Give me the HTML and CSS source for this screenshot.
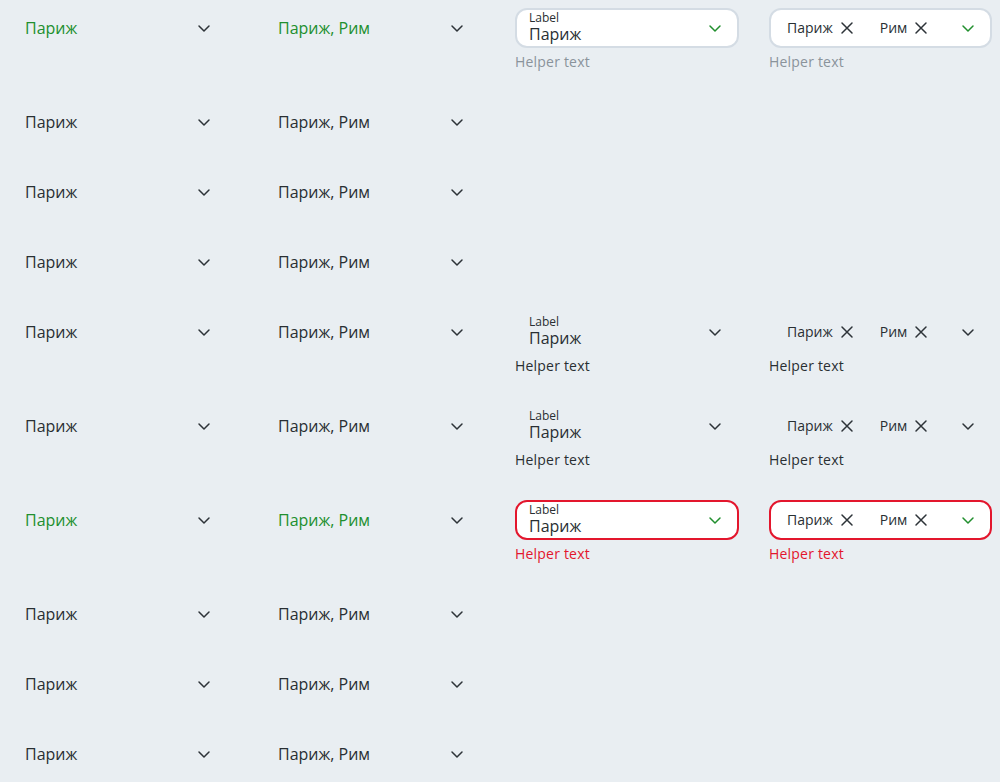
FILE: index.html
```html
<!DOCTYPE html>
<html lang="ru">
<head>
<meta charset="utf-8">
<title>Select</title>
<link rel="stylesheet" href="styles.css">
</head>
<body>
<div class="page">

  <div class="row">
    <div class="cell"><div class="dd ok"><span class="val">Париж</span><svg class="chev" viewBox="0 0 16 16"><path d="M3 6l5 5 5-5"/></svg></div></div>
    <div class="cell"><div class="dd ok"><span class="val">Париж, Рим</span><svg class="chev" viewBox="0 0 16 16"><path d="M3 6l5 5 5-5"/></svg></div></div>
    <div class="cell c3">
      <div class="field filled"><div class="stack"><span class="lbl">Label</span><span class="fval">Париж</span></div><svg class="chev green" viewBox="0 0 16 16"><path d="M3 6l5 5 5-5"/></svg></div>
      <div class="helper muted">Helper text</div>
    </div>
    <div class="cell c4">
      <div class="field filled chips"><div class="chiplist"><span class="chip">Париж<svg class="x" viewBox="0 0 14 14"><path d="M2 2l10 10M12 2L2 12"/></svg></span><span class="chip">Рим<svg class="x" viewBox="0 0 14 14"><path d="M2 2l10 10M12 2L2 12"/></svg></span></div><svg class="chev green" viewBox="0 0 16 16"><path d="M3 6l5 5 5-5"/></svg></div>
      <div class="helper muted">Helper text</div>
    </div>
  </div>

  <div class="row">
    <div class="cell"><div class="dd"><span class="val">Париж</span><svg class="chev" viewBox="0 0 16 16"><path d="M3 6l5 5 5-5"/></svg></div></div>
    <div class="cell"><div class="dd"><span class="val">Париж, Рим</span><svg class="chev" viewBox="0 0 16 16"><path d="M3 6l5 5 5-5"/></svg></div></div>
  </div>

  <div class="row">
    <div class="cell"><div class="dd"><span class="val">Париж</span><svg class="chev" viewBox="0 0 16 16"><path d="M3 6l5 5 5-5"/></svg></div></div>
    <div class="cell"><div class="dd"><span class="val">Париж, Рим</span><svg class="chev" viewBox="0 0 16 16"><path d="M3 6l5 5 5-5"/></svg></div></div>
  </div>

  <div class="row">
    <div class="cell"><div class="dd"><span class="val">Париж</span><svg class="chev" viewBox="0 0 16 16"><path d="M3 6l5 5 5-5"/></svg></div></div>
    <div class="cell"><div class="dd"><span class="val">Париж, Рим</span><svg class="chev" viewBox="0 0 16 16"><path d="M3 6l5 5 5-5"/></svg></div></div>
  </div>

  <div class="row">
    <div class="cell"><div class="dd"><span class="val">Париж</span><svg class="chev" viewBox="0 0 16 16"><path d="M3 6l5 5 5-5"/></svg></div></div>
    <div class="cell"><div class="dd"><span class="val">Париж, Рим</span><svg class="chev" viewBox="0 0 16 16"><path d="M3 6l5 5 5-5"/></svg></div></div>
    <div class="cell c3">
      <div class="field"><div class="stack"><span class="lbl">Label</span><span class="fval">Париж</span></div><svg class="chev" viewBox="0 0 16 16"><path d="M3 6l5 5 5-5"/></svg></div>
      <div class="helper">Helper text</div>
    </div>
    <div class="cell c4">
      <div class="field chips"><div class="chiplist"><span class="chip">Париж<svg class="x" viewBox="0 0 14 14"><path d="M2 2l10 10M12 2L2 12"/></svg></span><span class="chip">Рим<svg class="x" viewBox="0 0 14 14"><path d="M2 2l10 10M12 2L2 12"/></svg></span></div><svg class="chev" viewBox="0 0 16 16"><path d="M3 6l5 5 5-5"/></svg></div>
      <div class="helper">Helper text</div>
    </div>
  </div>

  <div class="row">
    <div class="cell"><div class="dd"><span class="val">Париж</span><svg class="chev" viewBox="0 0 16 16"><path d="M3 6l5 5 5-5"/></svg></div></div>
    <div class="cell"><div class="dd"><span class="val">Париж, Рим</span><svg class="chev" viewBox="0 0 16 16"><path d="M3 6l5 5 5-5"/></svg></div></div>
    <div class="cell c3">
      <div class="field"><div class="stack"><span class="lbl">Label</span><span class="fval">Париж</span></div><svg class="chev" viewBox="0 0 16 16"><path d="M3 6l5 5 5-5"/></svg></div>
      <div class="helper">Helper text</div>
    </div>
    <div class="cell c4">
      <div class="field chips"><div class="chiplist"><span class="chip">Париж<svg class="x" viewBox="0 0 14 14"><path d="M2 2l10 10M12 2L2 12"/></svg></span><span class="chip">Рим<svg class="x" viewBox="0 0 14 14"><path d="M2 2l10 10M12 2L2 12"/></svg></span></div><svg class="chev" viewBox="0 0 16 16"><path d="M3 6l5 5 5-5"/></svg></div>
      <div class="helper">Helper text</div>
    </div>
  </div>

  <div class="row">
    <div class="cell"><div class="dd ok"><span class="val">Париж</span><svg class="chev" viewBox="0 0 16 16"><path d="M3 6l5 5 5-5"/></svg></div></div>
    <div class="cell"><div class="dd ok"><span class="val">Париж, Рим</span><svg class="chev" viewBox="0 0 16 16"><path d="M3 6l5 5 5-5"/></svg></div></div>
    <div class="cell c3">
      <div class="field filled error"><div class="stack"><span class="lbl">Label</span><span class="fval">Париж</span></div><svg class="chev green" viewBox="0 0 16 16"><path d="M3 6l5 5 5-5"/></svg></div>
      <div class="helper err">Helper text</div>
    </div>
    <div class="cell c4">
      <div class="field filled error chips"><div class="chiplist"><span class="chip">Париж<svg class="x" viewBox="0 0 14 14"><path d="M2 2l10 10M12 2L2 12"/></svg></span><span class="chip">Рим<svg class="x" viewBox="0 0 14 14"><path d="M2 2l10 10M12 2L2 12"/></svg></span></div><svg class="chev green" viewBox="0 0 16 16"><path d="M3 6l5 5 5-5"/></svg></div>
      <div class="helper err">Helper text</div>
    </div>
  </div>

  <div class="row">
    <div class="cell"><div class="dd"><span class="val">Париж</span><svg class="chev" viewBox="0 0 16 16"><path d="M3 6l5 5 5-5"/></svg></div></div>
    <div class="cell"><div class="dd"><span class="val">Париж, Рим</span><svg class="chev" viewBox="0 0 16 16"><path d="M3 6l5 5 5-5"/></svg></div></div>
  </div>

  <div class="row">
    <div class="cell"><div class="dd"><span class="val">Париж</span><svg class="chev" viewBox="0 0 16 16"><path d="M3 6l5 5 5-5"/></svg></div></div>
    <div class="cell"><div class="dd"><span class="val">Париж, Рим</span><svg class="chev" viewBox="0 0 16 16"><path d="M3 6l5 5 5-5"/></svg></div></div>
  </div>

  <div class="row">
    <div class="cell"><div class="dd"><span class="val">Париж</span><svg class="chev" viewBox="0 0 16 16"><path d="M3 6l5 5 5-5"/></svg></div></div>
    <div class="cell"><div class="dd"><span class="val">Париж, Рим</span><svg class="chev" viewBox="0 0 16 16"><path d="M3 6l5 5 5-5"/></svg></div></div>
  </div>

</div>
</body>
</html>
```

FILE: styles.css
```css
* { box-sizing: border-box; }

html, body {
  margin: 0;
  padding: 0;
  background: #e9eef2;
}

body {
  font-family: "Open Sans", "Noto Sans", sans-serif;
  color: #292f33;
  height: 782px;
  overflow: hidden;
}

.page {
  padding: 8px 0 0 11px;
  display: flex;
  flex-direction: column;
  gap: 30px;
}

.row {
  display: grid;
  grid-template-columns: 253px 251px 254px 223px;
  align-items: start;
}

.cell {
  display: flex;
  flex-direction: column;
}

.dd {
  width: 217px;
  height: 40px;
  border: 2px solid transparent;
  border-radius: 12px;
  padding: 0 14px 0 12px;
  display: flex;
  align-items: center;
  justify-content: space-between;
}

.val {
  font-size: 16px;
  line-height: 20px;
  color: #292f33;
}

.dd.ok .val { color: #218f2e; }

.chev {
  width: 16px;
  height: 16px;
  flex: none;
  fill: none;
  stroke: #2d3338;
  stroke-width: 1.5;
  stroke-linecap: round;
  stroke-linejoin: round;
}

.chev.green { stroke: #218f2e; }

.field {
  width: 224px;
  height: 40px;
  border: 2px solid transparent;
  border-radius: 12px;
  padding: 0 14px 0 12px;
  display: flex;
  align-items: center;
  justify-content: space-between;
}

.c4 .field { width: 223px; }

.field.filled {
  background: #ffffff;
  border-color: #d4dce4;
}

.field.error {
  border-color: #e3162d;
}

.stack {
  display: flex;
  flex-direction: column;
  margin-top: -1px;
}

.lbl {
  font-size: 12px;
  line-height: 14px;
  color: #292f33;
}

.fval {
  font-size: 16px;
  line-height: 19px;
  color: #292f33;
}

.chips { padding-left: 16px; }

.chiplist {
  display: flex;
  align-items: center;
  gap: 26px;
}

.chip {
  display: flex;
  align-items: center;
  gap: 7px;
  font-size: 14px;
  line-height: 18px;
  color: #292f33;
}

.x {
  width: 14px;
  height: 14px;
  fill: none;
  stroke: #2d3338;
  stroke-width: 1.5;
  stroke-linecap: round;
}

.helper {
  margin-top: 4px;
  font-size: 14px;
  line-height: 20px;
  color: #292f33;
  letter-spacing: 0.2px;
}

.helper.muted { color: #8a939b; }
.helper.err { color: #e3162d; }
```
